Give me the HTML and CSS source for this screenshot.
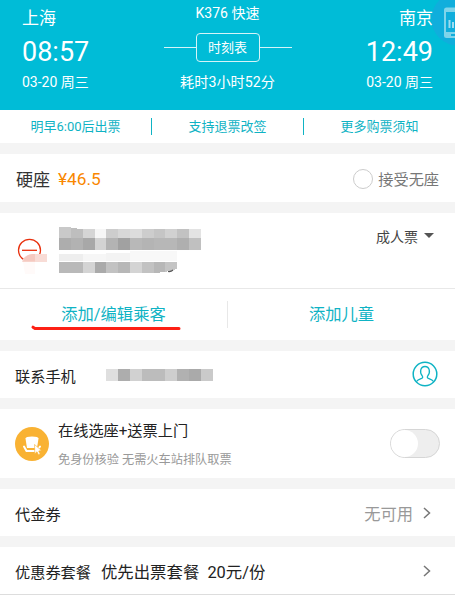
FILE: index.html
```html
<!DOCTYPE html>
<html lang="zh-CN">
<head>
  <meta charset="UTF-8">
  <meta name="viewport" content="width=device-width, initial-scale=1.0">
  <title>订单填写</title>
  <link rel="stylesheet" href="styles.css">
</head>
<body>
  <div class="header">
    <div class="station">
      <p class="city">上海</p>
      <p class="time">08:57</p>
      <p class="date">03-20 周三</p>
    </div>
    <div class="train">
      <p class="number">K376 快速</p>
      <div class="timetable"><a href="javascript:;">时刻表</a></div>
      <p class="cost">耗时3小时52分</p>
    </div>
    <div class="station right">
      <p class="city">南京</p>
      <p class="time">12:49</p>
      <p class="date">03-20 周三</p>
    </div>
    <svg class="float-btn" width="24" height="48" viewBox="0 0 24 48">
      <circle cx="27" cy="19" r="26.500" fill="#10aedc"/>
      <rect x="13" y="7.500" width="24" height="30.500" rx="2.500" fill="#80d4ea"/>
      <rect x="15" y="12" width="20" height="20" fill="#10aedc"/>
      <path d="M18.500 20v8M22 22v6" stroke="#9fdcf0" stroke-width="2"/>
      <path d="M20 35h5" stroke="#10aedc" stroke-width="2"/>
    </svg>
  </div>
  <div class="tips">
    <a href="javascript:;">明早6:00后出票</a>
    <a href="javascript:;">支持退票改签</a>
    <a href="javascript:;">更多购票须知</a>
  </div>

  <div class="row seat">
    <span class="seat-name">硬座</span>
    <span class="price">¥46.5</span>
    <span class="radio"></span>
    <span class="no-seat">接受无座</span>
  </div>

  <div class="card">
    <div class="passenger">
      <svg class="person" width="190" height="60" viewBox="14 220 190 60">
        <circle cx="29.500" cy="250.300" r="11" fill="none" stroke="#e8310f" stroke-width="1.300"/>
        <path d="M22 250.300h15" stroke="#e8310f" stroke-width="1.300"/>
        <path d="M22 262c1-5 5-8 12-8h13v8z" fill="#f8dcd6"/>
        <path d="M23 261.500c1-5 5-7.500 12-7.500v7.500z" fill="#f5c9c0"/>
        <path d="M23 262h12v12H25z" fill="#fffaf9"/>
        <g shape-rendering="crispEdges">
          <path d="M59 227l12 .5 12 2v9H59z" fill="#c9c9c9"/>
          <path d="M71 228l12 1v9H71z" fill="#bebebe"/>
          <path d="M83 229h12v9H83z" fill="#d5d5d5"/>
          <path d="M95 229h11v9H95z" fill="#f6f6f6"/>
          <path d="M106 229h12v9h-12z" fill="#cdcdcd"/>
          <path d="M118 229h12v9h-12z" fill="#d7d7d7"/>
          <path d="M130 229h12v9h-12z" fill="#dcdcdc"/>
          <path d="M142 229h12v9h-12z" fill="#cdcdcd"/>
          <path d="M154 229h11v9h-11z" fill="#c5c5c5"/>
          <path d="M165 229h12v9h-12z" fill="#d1d1d1"/>
          <path d="M177 229h12v9h-12z" fill="#c2c2c2"/>
          <path d="M189 229h12v9h-12z" fill="#e3e3e3"/>
          <path d="M59 238h12v12H59z" fill="#adadad"/>
          <path d="M71 238h12v12H71z" fill="#b2b2b2"/>
          <path d="M83 238h12v12H83z" fill="#a8a8a8"/>
          <path d="M95 238h11v12H95z" fill="#d3d3d3"/>
          <path d="M106 238h12v12h-12z" fill="#b3b3b3"/>
          <path d="M118 238h12v12h-12z" fill="#a1a1a1"/>
          <path d="M130 238h12v12h-12z" fill="#b8b8b8"/>
          <path d="M142 238h12v12h-12z" fill="#b4b4b4"/>
          <path d="M154 238h23v12h-23z" fill="#b7b7b7"/>
          <path d="M177 238h12v12h-12z" fill="#afafaf"/>
          <path d="M189 238h12v12h-12z" fill="#c0c0c0"/>
          <path d="M59 254h24v7H59z" fill="#eeeeee"/>
          <path d="M83 254h23v7H83z" fill="#f6f6f6"/>
          <path d="M106 253h24v8h-24z" fill="#f3f3f3"/>
          <path d="M130 251h47v10h-47z" fill="#f8f8f8"/>
          <path d="M59 262h24v11H59z" fill="#b9b9b9"/>
          <path d="M83 262h12v11H83z" fill="#d4d4d4"/>
          <path d="M95 262h11v11H95z" fill="#aaaaaa"/>
          <path d="M106 262h12v11h-12z" fill="#c2c2c2"/>
          <path d="M118 262h12v11h-12z" fill="#b7b7b7"/>
          <path d="M130 262h12v11h-12z" fill="#d4d4d4"/>
          <path d="M142 262h12v11h-12z" fill="#c2c2c2"/>
          <path d="M154 262h11v10l-11 1z" fill="#b7b7b7"/>
          <path d="M165 262h12v7l-12 3z" fill="#c4c4c4"/>
        </g>
        <path d="M168 271.500q3 .5 5-1.500" fill="none" stroke="#555" stroke-width="1.200"/>
      </svg>
      <a href="javascript:;" class="ticket-type">成人票</a>
    </div>
    <div class="add">
      <a href="javascript:;">添加/编辑乘客
        <svg class="mark" width="150" height="6" viewBox="0 0 150 6">
          <path d="M2 2.200l2 1.300h144" fill="none" stroke="#fd2015" stroke-width="3" stroke-linecap="round" stroke-linejoin="round"/>
        </svg>
      </a>
      <a href="javascript:;">添加儿童</a>
    </div>
  </div>

  <div class="row phone">
    <span class="label">联系手机</span>
    <svg class="phone-number" width="107" height="12" shape-rendering="crispEdges">
      <path d="M0 0h12v12H0z" fill="#dfdfdf"/>
      <path d="M12 0h12v12H12z" fill="#adadad"/>
      <path d="M24 0h12v12H24z" fill="#d1d1d1"/>
      <path d="M36 0h23v12H36z" fill="#bcbcbc"/>
      <path d="M59 0h12v12H59z" fill="#cecece"/>
      <path d="M71 0h12v12H71z" fill="#b1b1b1"/>
      <path d="M83 0h12v12H83z" fill="#aaaaaa"/>
      <path d="M95 0h12v12H95z" fill="#cacaca"/>
    </svg>
    <svg class="contact" width="26" height="26" viewBox="0 0 26 26" fill="none" stroke="#0fb3c4">
      <circle cx="13" cy="13" r="11.800" stroke-width="1.500"/>
      <path d="M4.500 20.500c1-1.500 3-2.200 5-3 1.200-.5 1.500-1.500.8-2.500-3-3.500-2-9.500 2.700-9.500s5.700 6 2.700 9.500c-.7 1-.4 2 .8 2.500 2 .8 4 1.500 5 3" stroke-width="1.300"/>
    </svg>
  </div>

  <div class="row online">
    <svg class="seat-icon" width="34" height="34" viewBox="0 0 34 34">
      <circle cx="17" cy="17" r="17" fill="#f9b233"/>
      <path d="M10.500 11.500q0-2 6.500-2t6.500 2l-1.500 9.500h-10z" fill="#fff"/>
      <path d="M9 19.500l2.500 4.500h8M25 19.500l-1 1.500" fill="none" stroke="#fff" stroke-width="2" stroke-linecap="round" stroke-linejoin="round"/>
      <path d="M19.500 17.500l7 6-2.800.5 1.500 3-1.800.8-1.400-3-2.200 2z" fill="#fff" stroke="#f9b233" stroke-width=".6"/>
    </svg>
    <div class="online-text">
      <p class="title">在线选座+送票上门</p>
      <p class="desc">免身份核验 无需火车站排队取票</p>
    </div>
    <span class="switch"></span>
  </div>

  <div class="row voucher">
    <span class="label">代金券</span>
    <span class="none">无可用</span>
    <svg class="arrow" width="8" height="12" viewBox="0 0 8 12"><path d="M1 1l5.500 5L1 11"/></svg>
  </div>

  <div class="row package">
    <span class="label">优惠券套餐</span>
    <span class="package-name">优先出票套餐&nbsp; 20元/份</span>
    <svg class="arrow" width="8" height="12" viewBox="0 0 8 12"><path d="M1 1l5.500 5L1 11"/></svg>
  </div>
</body>
</html>
```
FILE: styles.css
```css
* {
  box-sizing: border-box;
}
body {
  width: 455px;
  height: 599px;
  margin: 0;
  overflow: hidden;
  background: #fff;
  color: #222;
  font-family: Roboto, "Noto Sans CJK SC", sans-serif;
  white-space: nowrap;
}
p {
  margin: 0;
}
a {
  color: #0fb3c4;
  text-decoration: none;
}
svg {
  display: block;
  flex: none;
}

/* 车次信息 */
.header {
  position: relative;
  display: flex;
  justify-content: space-between;
  height: 110px;
  padding: 0 22px;
  background: #00bcd7;
  color: #fff;
}
.station {
  width: 100px;
  padding-top: 6px;
}
.right {
  text-align: right;
}
.city {
  position: relative;
  z-index: 1;
  font-size: 17px;
  line-height: 24px;
}
.time {
  margin-top: 4px;
  font-size: 27px;
  line-height: 36px;
}
.date {
  font-size: 14px;
  line-height: 25px;
}
.train {
  text-align: center;
  font-size: 14px;
}
.number {
  height: 33px;
  line-height: 26px;
}
.timetable {
  display: flex;
  align-items: center;
}
.timetable:before, .timetable:after {
  content: "";
  width: 32px;
  height: 1px;
  background: #d5f4f8;
}
.timetable a {
  width: 64px;
  height: 29px;
  border: 1px solid #d5f4f8;
  border-radius: 4px;
  font-size: 13px;
  line-height: 28px;
  color: #fff;
}
.cost {
  margin-top: 8px;
  font-size: 14.2px;
  line-height: 25px;
}
.float-btn {
  position: absolute;
  top: 0;
  right: 0;
}

.tips {
  display: flex;
  height: 33px;
  align-items: center;
}
.tips a {
  flex: 1;
  text-align: center;
  font-size: 13px;
  line-height: 17px;
}
.tips a + a {
  border-left: 1px solid #0fb3c4;
}

.row, .card {
  border-top: 11px solid #f4f4f4;
}
.row {
  display: flex;
  align-items: center;
  padding: 0 15px;
}
.label {
  font-size: 15.2px;
}

.seat {
  height: 59px;
}
.seat-name {
  font-size: 17px;
  margin-left: 1px;
  color: #333;
}
.price {
  margin: 2px 0 0 8px;
  font-size: 17.3px;
  color: #f98700;
}
.radio {
  width: 20px;
  height: 20px;
  margin: 2px 0 0 auto;
  border: 1px solid #ccc;
  border-radius: 50%;
}
.no-seat {
  margin: 0 1px 0 5px;
  font-size: 15.2px;
  color: #777;
}

/* 乘客 */
.passenger {
  display: flex;
  justify-content: space-between;
  height: 76px;
  padding: 7px 21px 0 14px;
  border-bottom: 1px solid #e8e8e8;
}
.ticket-type {
  display: flex;
  align-items: center;
  height: 31px;
  font-size: 14px;
  color: #444;
}
.ticket-type:after {
  content: "";
  margin-left: 6px;
  border: 5px solid transparent;
  border-top-color: #555;
  border-bottom: 0;
}
.add {
  display: flex;
  align-items: center;
  height: 51px;
}
.add a {
  position: relative;
  flex: 1;
  text-align: center;
  font-size: 16.3px;
  line-height: 27px;
}
.add a + a {
  border-left: 1px solid #e8e8e8;
}
.mark {
  position: absolute;
  left: 31px;
  top: 24px;
}

.phone {
  height: 58px;
}
.phone-number {
  margin-left: 30px;
}
.contact {
  margin: 0 2px 2px auto;
}

.online {
  height: 80px;
}
.online-text {
  margin: 2px 0 0 9px;
}
.title {
  font-size: 15.2px;
  line-height: 24px;
}
.desc {
  margin-top: 6px;
  font-size: 12.2px;
  line-height: 22px;
  color: #999;
}
.switch {
  width: 50px;
  height: 29px;
  margin-left: auto;
  border: 1px solid #d6d6d6;
  border-radius: 15px;
  background: #eee;
}
.switch:before {
  content: "";
  display: block;
  width: 27px;
  height: 27px;
  border-radius: 50%;
  background: #fff;
}

.voucher {
  height: 58px;
}
.none {
  margin-left: auto;
  font-size: 16.3px;
  color: #999;
}
.arrow {
  margin: 0 9px 0 10px;
  fill: none;
  stroke: #777;
  stroke-width: 1.5;
}
.package {
  height: 59px;
  border-bottom: 1px solid #ddd;
}
.package-name {
  margin-left: 10px;
  font-size: 16.4px;
}
.package .arrow {
  margin-left: auto;
}
```
